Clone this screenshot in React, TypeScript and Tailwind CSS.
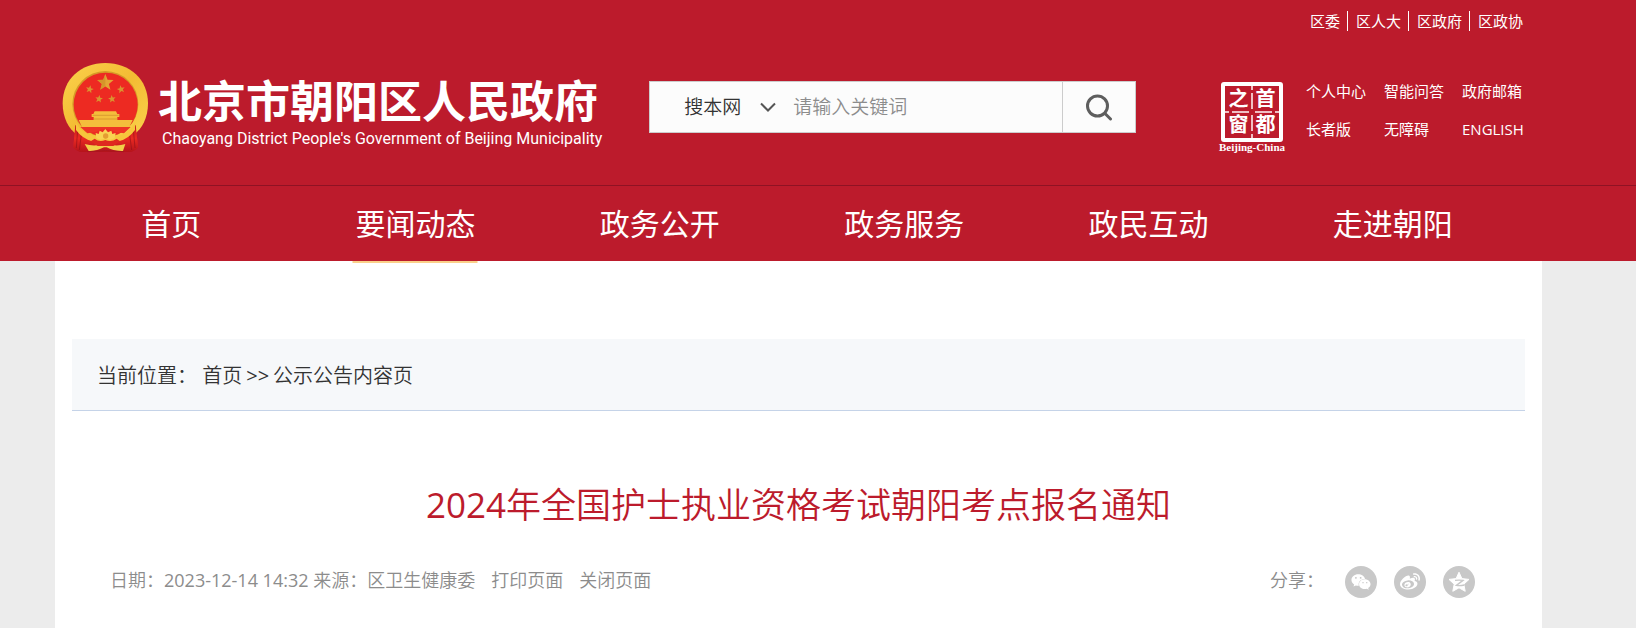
import { FaWeibo, FaWeixin } from "react-icons/fa";

const districtLinks = ["区委", "区人大", "区政府", "区政协"];
const serviceLinks = ["个人中心", "智能问答", "政府邮箱", "长者版", "无障碍", "ENGLISH"];
const channels = ["首页", "要闻动态", "政务公开", "政务服务", "政民互动", "走进朝阳"];

const STAR = "M0 -10 L2.6 -3.4 L9.5 -3.1 L4.1 1.4 L5.9 8.1 L0 4.3 L-5.9 8.1 L-4.1 1.4 L-9.5 -3.1 L-2.6 -3.4 Z";

function Emblem() {
  return (
    <svg viewBox="36 36 261 276" className="h-[92px] w-[87px] shrink-0" aria-hidden="true">
      <defs>
        <linearGradient id="gold" x1="0" y1="0" x2="1" y2="1">
          <stop offset="0" stopColor="#fbd24c" />
          <stop offset="0.5" stopColor="#f3bb33" />
          <stop offset="1" stopColor="#fad44e" />
        </linearGradient>
        <linearGradient id="drape" x1="0" y1="0" x2="0" y2="1">
          <stop offset="0" stopColor="#c31a1b" />
          <stop offset="0.5" stopColor="#ea2a22" />
          <stop offset="1" stopColor="#b5131b" />
        </linearGradient>
      </defs>
      <path d="M76 226 L70 292 Q82 308 104 306 L232 306 Q252 308 264 292 L257 226 Z" fill="url(#drape)" />
      <path d="M38 160 C38 88 92 39 166 39 C240 39 294 88 294 160 C294 204 276 236 252 254 L204 274 L128 274 L80 254 C56 236 38 204 38 160 Z" fill="url(#gold)" />
      <circle cx="166" cy="162" r="99" fill="#d69a27" />
      <circle cx="167" cy="164" r="96" fill="#ed2a22" />
      <path d={STAR} transform="translate(166 98) scale(2.6)" fill="#e4a534" />
      <path d="M166 72 V109 L151 119 L156 101 L142 90 L160 89 Z" fill="#c98a22" opacity="0.55" />
      <path d={STAR} transform="translate(119 118) scale(1.25) rotate(12)" fill="#d99430" />
      <path d={STAR} transform="translate(213 118) scale(1.25) rotate(-12)" fill="#d99430" />
      <path d={STAR} transform="translate(147 147) scale(1.2) rotate(8)" fill="#d99430" />
      <path d={STAR} transform="translate(186 147) scale(1.2) rotate(-8)" fill="#d99430" />
      <path d="M134 184 H198 L202 192 H208 V201 H202 V210 H248 L238 231 H96 L86 210 H131 V201 H125 V192 H130 Z" fill="#f4be3c" />
      <path d="M128 196 H206 M131 207 H202" stroke="#ce8c29" strokeWidth="2" />
      <path d="M91 231 H242 L222 250 L196 246 Q166 228 138 246 L112 250 Z" fill="#ee3525" />
      <path d="M76 224 Q88 248 110 264 L98 306 Q80 306 70 292 Z" fill="url(#drape)" />
      <path d="M257 224 Q246 248 224 264 L234 306 Q254 306 264 292 Z" fill="url(#drape)" />
      <path d="M83 238 L79 294 M94 254 L88 300 M250 238 L255 294 M239 254 L245 300" stroke="#8f1119" strokeWidth="3" opacity="0.6" />
      <path d="M78 220 Q102 258 141 259 L129 274 Q98 268 78 240 Z" fill="#f6c63c" />
      <path d="M255 220 Q231 258 192 259 L205 274 Q235 268 255 240 Z" fill="#f6c63c" />
      <path d="M104 282 Q140 292 166 278 Q194 292 226 282 L219 303 Q190 304 170 292 H162 Q140 304 116 303 Z" fill="#f2cf49" />
      <path d="M134 266 Q148 278 166 270 Q184 278 200 266 L210 274 L190 288 H143 L122 274 Z" fill="#df291f" />
      <path d="M137 249 L146 252 L149 242 L158 247 L166 237 L174 247 L184 242 L187 252 L197 249 L194 264 Q180 274 166 264 Q152 274 139 264 Z" fill="#f9d252" />
      <circle cx="167" cy="258" r="8" fill="#e59c31" />
      <path d="M112 305 Q166 299 222 305" stroke="#a51621" strokeWidth="3" fill="none" />
    </svg>
  );
}

function Seal() {
  return (
    <a href="#capital" className="flex w-[68px] flex-col items-center text-white">
      <span className="relative grid h-[60px] w-[62px] grid-cols-2 rounded-[3px] border-4 border-white text-center text-xl leading-[26px] font-bold">
        <span>之</span>
        <span>首</span>
        <span>窗</span>
        <span>都</span>
        <svg viewBox="0 0 54 52" className="absolute inset-0 h-full w-full" aria-hidden="true">
          <path d="M27 0V4M27 7V23M27 29V45M27 48V52M0 26H4M7 26H24M30 26H47M50 26H54" stroke="#f0bfc4" strokeWidth="2" />
        </svg>
      </span>
      <span className="font-['Liberation_Serif',serif] text-[11px] leading-[11px] font-bold whitespace-nowrap">Beijing-China</span>
    </a>
  );
}

function QzoneIcon() {
  return (
    <svg viewBox="0 0 24 24" className="size-6" aria-hidden="true">
      <path
        d="M12 2.2 L14.9 8.6 L22 9.4 L16.8 14.2 L18.2 21.3 L12 17.8 L5.8 21.3 L7.2 14.2 L2 9.4 L9.1 8.6 Z"
        fill="#fff"
        stroke="#fff"
        strokeLinejoin="round"
      />
      <path d="M8 10.4 Q12 9.8 16 10.4 L9.4 15.4 Q13 16 17.4 15" fill="none" stroke="#c8c8c8" strokeWidth="1.4" />
    </svg>
  );
}

export default function App() {
  return (
    <div className="min-h-screen bg-[#ececec] font-['Open_Sans','Noto_Sans_CJK_SC',sans-serif]">
      <header className="bg-[#bc1b2c] text-white">
        <div className="border-b border-[#8f1224] pt-[11px] pr-[106px] pb-[31px] pl-[62px]">
          <nav aria-label="区级机构" className="flex justify-end">
            {districtLinks.map((name) => (
              <a key={name} href="#org" className="border-r border-white pr-[7px] pl-2 text-[15px] leading-5 last:border-r-0">
                {name}
              </a>
            ))}
          </nav>

          <div className="mt-[31px] flex items-start">
            <a href="#home" className="flex gap-[9px]">
              <Emblem />
              <span className="flex flex-col pt-[14px]">
                <span className="text-[44px] leading-[50px] font-bold whitespace-nowrap">北京市朝阳区人民政府</span>
                <span className="pl-1 font-['Roboto',sans-serif] text-base leading-[26px] whitespace-nowrap">
                  Chaoyang District People's Government of Beijing Municipality
                </span>
              </span>
            </a>

            <form className="mt-[19px] ml-[47px] flex h-[52px] w-[487px] border border-[#ccc] bg-[#fcfcfc] text-[19px]" onSubmit={(e) => e.preventDefault()}>
              <div className="relative w-[126px]">
                <select aria-label="搜索范围" className="h-full w-full appearance-none pl-[34px] font-[350] text-[#333] outline-none">
                  <option>搜本网</option>
                </select>
                <svg viewBox="0 0 16 10" className="pointer-events-none absolute top-5 right-0 h-[10px] w-4" fill="none" stroke="#555" strokeWidth="2" aria-hidden="true">
                  <path d="M1 1.5 L8 8.5 L15 1.5" />
                </svg>
              </div>
              <input
                aria-label="关键词"
                placeholder="请输入关键词"
                className="min-w-0 flex-1 pl-[17px] font-[350] outline-none placeholder:text-[#8c8c8c]"
              />
              <button type="submit" aria-label="搜索" className="flex w-[73px] items-center justify-center border-l border-[#ccc]">
                <svg viewBox="0 0 28 28" className="size-7" fill="none" stroke="#5e5e5e" strokeWidth="3" strokeLinecap="round" aria-hidden="true">
                  <circle cx="12.5" cy="13" r="10" />
                  <path d="M20 20.5 L25.5 26" />
                </svg>
              </button>
            </form>

            <div className="mt-5 mr-1 ml-auto flex gap-5">
              <Seal />
              <nav aria-label="服务" className="-mt-[10px] grid grid-cols-[60px_60px_64px] content-start gap-x-[18px] text-[15px] leading-[38px] whitespace-nowrap">
                {serviceLinks.map((name) => (
                  <a key={name} href="#service">
                    {name}
                  </a>
                ))}
              </nav>
            </div>
          </div>
        </div>

        <nav aria-label="频道" className="grid h-[75px] grid-cols-6 pr-[121px] pl-[49px] text-center text-[30px] leading-[75px]">
          {channels.map((name) => (
            <a key={name} href="#channel" className="relative">
              {name}
              {name === "要闻动态" && <span className="absolute top-full left-1/2 h-[2px] w-[125px] -translate-x-1/2 bg-[#fad08a]" />}
            </a>
          ))}
        </nav>
      </header>

      <main className="mr-[94px] ml-[55px] min-h-[367px] bg-white px-[17px] pt-[78px]">
        <nav aria-label="当前位置" className="border-b border-[#c5d3e8] bg-[#f6f8fa] pt-[2px] pl-[25px] text-xl leading-[69px] font-[350] text-[#333]">
          当前位置： <a href="#home">首页</a>
          <span className="mx-1 font-normal">&gt;&gt;</span>
          公示公告内容页
        </nav>

        <h1 className="mt-16 text-center text-[35px] leading-[60px] font-[350] text-[#bc1b2c]">
          <span className="font-normal">2024</span>年全国护士执业资格考试朝阳考点报名通知
        </h1>

        <div className="mt-[31px] flex items-start justify-between pr-[50px] pl-[38px] text-lg leading-7 font-[350] text-[#8c8c8c]">
          <p>
            日期：<time className="font-normal">2023-12-14 14:32</time> 来源：区卫生健康委
            <button type="button" className="ml-4">打印页面</button>
            <button type="button" className="ml-4">关闭页面</button>
          </p>
          <div className="flex items-start gap-[17px]">
            <span className="mr-1">分享：</span>
            <a href="#wechat" aria-label="微信" className="grid size-8 place-items-center rounded-full bg-[#c8c8c8] text-white">
              <FaWeixin className="size-5" />
            </a>
            <a href="#weibo" aria-label="微博" className="grid size-8 place-items-center rounded-full bg-[#c8c8c8] text-white">
              <FaWeibo className="size-5" />
            </a>
            <a href="#qzone" aria-label="QQ空间" className="grid size-8 place-items-center rounded-full bg-[#c8c8c8] text-white">
              <QzoneIcon />
            </a>
          </div>
        </div>
      </main>
    </div>
  );
}
